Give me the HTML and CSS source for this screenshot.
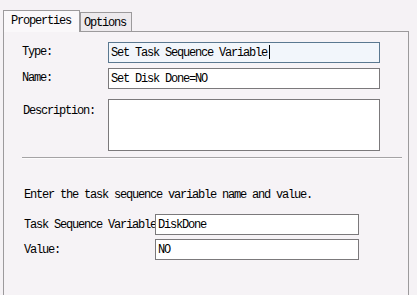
FILE: index.html
```html
<!DOCTYPE html>
<html lang="en">
<head>
    <meta charset="UTF-8">
    <meta name="viewport" content="width=device-width, initial-scale=1.0">
    <title>Set Task Sequence Variable</title>
    <link rel="stylesheet" href="styles.css">
</head>
<body>
    <!-- tab strip -->
    <div class="tabs">
        <div class="tab active">Properties</div>
        <div class="tab">Options</div>
    </div>

    <!-- properties page -->
    <div class="panel">
        <div class="row">
            <div class="label">Type:</div>
            <div class="field focused">Set Task Sequence Variable<span class="caret"></span></div>
        </div>
        <div class="row">
            <div class="label">Name:</div>
            <div class="field">Set Disk Done=NO</div>
        </div>
        <div class="row desc-row">
            <div class="label desc">Description:</div>
            <div class="field area"></div>
        </div>

        <div class="sep"></div>

        <p class="hint">Enter the task sequence variable name and value.</p>

        <div class="row var-row">
            <div class="label var">Task Sequence Variable</div>
            <div class="field short">DiskDone</div>
        </div>
        <div class="row var-row">
            <div class="label var">Value:</div>
            <div class="field short">NO</div>
        </div>
    </div>
</body>
</html>
```

FILE: styles.css
```css
*{
    margin: 0px;
    padding: 0px;
    box-sizing: border-box;
}

body{
    background: #f5f2f5;
    font-family: "Liberation Mono", "DejaVu Sans Mono", monospace;
    font-size: 12px;
    letter-spacing: -1.2px;
    color: #000;
    height: 295px;
    overflow: hidden;
    display: flex;
    flex-direction: column;
}

/* tabs */
.tabs{
    display: flex;
    align-items: flex-end;
    padding: 10px 0px 0px 3px;
    position: relative;
    z-index: 1;
}
.tab{
    height: 19px;
    padding: 2px 5px 0px 3px;
    border: 1px solid #9c9a9c;
    border-bottom: none;
    background: #edeaed;
    line-height: 16px;
}
.tab.active{
    height: 22px;
    padding: 2px 8px 0px 7px;
    background: #faf8fa;
    margin-bottom: -1px;
    line-height: 16px;
}

/* page */
.panel{
    margin-left: 3px;
    width: 406px;
    flex: 1;
    border: 1px solid #9c9a9c;
    border-bottom: none;
    background: #f6f3f6;
    padding: 10px 0px 0px 18px;
    display: flex;
    flex-direction: column;
}

.row{
    display: flex;
    align-items: flex-start;
    margin-bottom: 5px;
}
.label{
    width: 86px;
    padding-top: 3px;
    line-height: 14px;
    white-space: nowrap;
}
.desc-row{
    margin-top: 5px;
}
.desc{
    padding-top: 5px;
    padding-left: 1px;
}

.field{
    width: 272px;
    height: 21px;
    border: 1px solid #7b797b;
    background: #fff;
    padding: 2px 0px 0px 2px;
    line-height: 16px;
    white-space: nowrap;
}
.field.focused{
    border-color: #5a7890;
    background: #f2f6fb;
}
.field.area{
    height: 52px;
}
.caret{
    display: inline-block;
    width: 1px;
    height: 14px;
    background: #000;
    vertical-align: -3px;
    margin-left: 2px;
}

.sep{
    margin-top: 1px;
    width: 380px;
    height: 2px;
    border-top: 1px solid #a5a3a5;
    border-bottom: 1px solid #fdfcfd;
}

.hint{
    margin: 29px 0px 12px 2px;
    line-height: 14px;
}

.var-row{
    margin-left: 2px;
    margin-bottom: 4px;
}
.label.var{
    width: 131px;
    padding-top: 4px;
}
.field.short{
    width: 204px;
}
```
